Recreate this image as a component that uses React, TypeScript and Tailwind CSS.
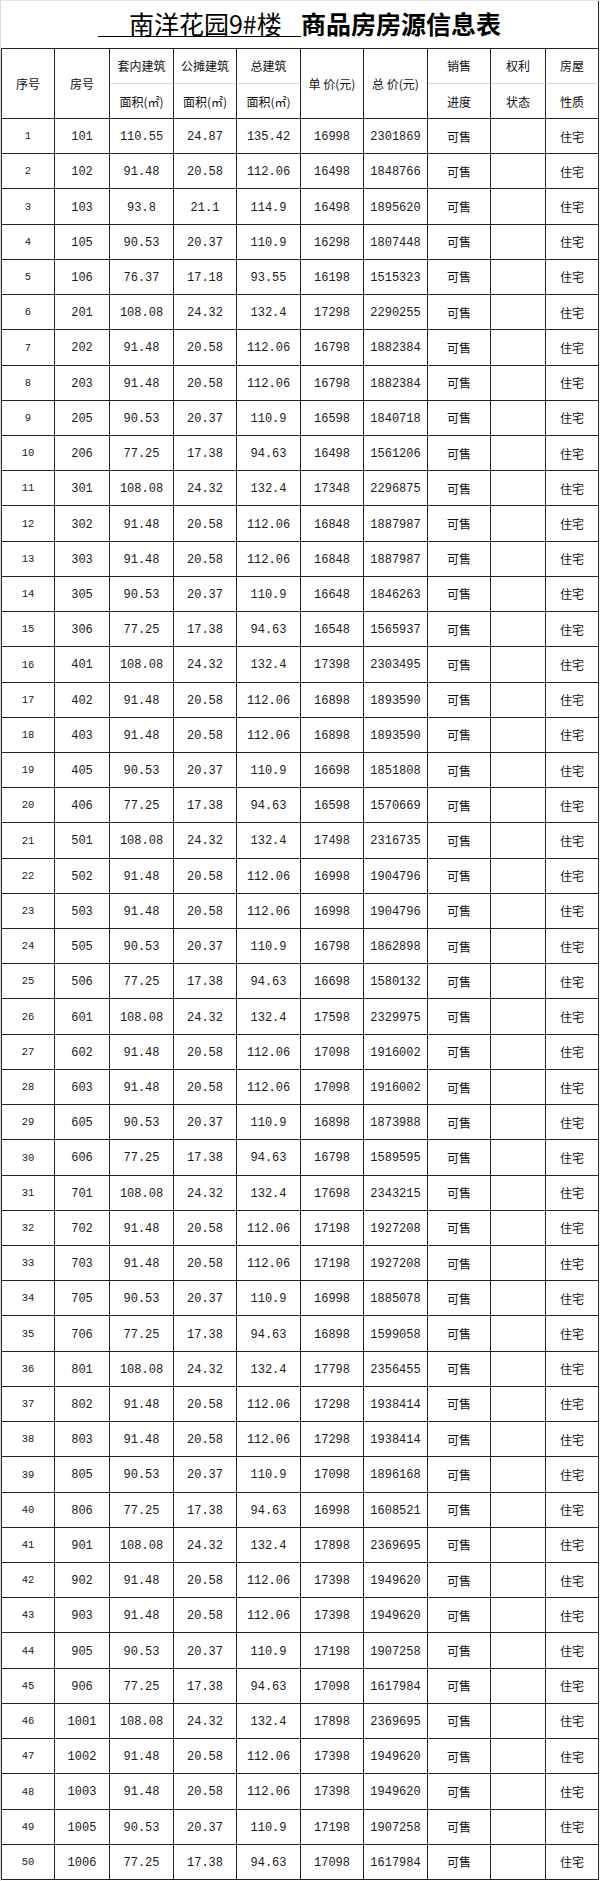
import React from "react";

type Row = [number, string, string, string, string, string, string];

const rows: Row[] = [
  [1, "101", "110.55", "24.87", "135.42", "16998", "2301869"],
  [2, "102", "91.48", "20.58", "112.06", "16498", "1848766"],
  [3, "103", "93.8", "21.1", "114.9", "16498", "1895620"],
  [4, "105", "90.53", "20.37", "110.9", "16298", "1807448"],
  [5, "106", "76.37", "17.18", "93.55", "16198", "1515323"],
  [6, "201", "108.08", "24.32", "132.4", "17298", "2290255"],
  [7, "202", "91.48", "20.58", "112.06", "16798", "1882384"],
  [8, "203", "91.48", "20.58", "112.06", "16798", "1882384"],
  [9, "205", "90.53", "20.37", "110.9", "16598", "1840718"],
  [10, "206", "77.25", "17.38", "94.63", "16498", "1561206"],
  [11, "301", "108.08", "24.32", "132.4", "17348", "2296875"],
  [12, "302", "91.48", "20.58", "112.06", "16848", "1887987"],
  [13, "303", "91.48", "20.58", "112.06", "16848", "1887987"],
  [14, "305", "90.53", "20.37", "110.9", "16648", "1846263"],
  [15, "306", "77.25", "17.38", "94.63", "16548", "1565937"],
  [16, "401", "108.08", "24.32", "132.4", "17398", "2303495"],
  [17, "402", "91.48", "20.58", "112.06", "16898", "1893590"],
  [18, "403", "91.48", "20.58", "112.06", "16898", "1893590"],
  [19, "405", "90.53", "20.37", "110.9", "16698", "1851808"],
  [20, "406", "77.25", "17.38", "94.63", "16598", "1570669"],
  [21, "501", "108.08", "24.32", "132.4", "17498", "2316735"],
  [22, "502", "91.48", "20.58", "112.06", "16998", "1904796"],
  [23, "503", "91.48", "20.58", "112.06", "16998", "1904796"],
  [24, "505", "90.53", "20.37", "110.9", "16798", "1862898"],
  [25, "506", "77.25", "17.38", "94.63", "16698", "1580132"],
  [26, "601", "108.08", "24.32", "132.4", "17598", "2329975"],
  [27, "602", "91.48", "20.58", "112.06", "17098", "1916002"],
  [28, "603", "91.48", "20.58", "112.06", "17098", "1916002"],
  [29, "605", "90.53", "20.37", "110.9", "16898", "1873988"],
  [30, "606", "77.25", "17.38", "94.63", "16798", "1589595"],
  [31, "701", "108.08", "24.32", "132.4", "17698", "2343215"],
  [32, "702", "91.48", "20.58", "112.06", "17198", "1927208"],
  [33, "703", "91.48", "20.58", "112.06", "17198", "1927208"],
  [34, "705", "90.53", "20.37", "110.9", "16998", "1885078"],
  [35, "706", "77.25", "17.38", "94.63", "16898", "1599058"],
  [36, "801", "108.08", "24.32", "132.4", "17798", "2356455"],
  [37, "802", "91.48", "20.58", "112.06", "17298", "1938414"],
  [38, "803", "91.48", "20.58", "112.06", "17298", "1938414"],
  [39, "805", "90.53", "20.37", "110.9", "17098", "1896168"],
  [40, "806", "77.25", "17.38", "94.63", "16998", "1608521"],
  [41, "901", "108.08", "24.32", "132.4", "17898", "2369695"],
  [42, "902", "91.48", "20.58", "112.06", "17398", "1949620"],
  [43, "903", "91.48", "20.58", "112.06", "17398", "1949620"],
  [44, "905", "90.53", "20.37", "110.9", "17198", "1907258"],
  [45, "906", "77.25", "17.38", "94.63", "17098", "1617984"],
  [46, "1001", "108.08", "24.32", "132.4", "17898", "2369695"],
  [47, "1002", "91.48", "20.58", "112.06", "17398", "1949620"],
  [48, "1003", "91.48", "20.58", "112.06", "17398", "1949620"],
  [49, "1005", "90.53", "20.37", "110.9", "17198", "1907258"],
  [50, "1006", "77.25", "17.38", "94.63", "17098", "1617984"],
];

const cell = "flex items-center justify-center border-r border-b border-[#262626]";
const cjk = "font-['Noto_Sans_CJK_SC',sans-serif] text-[12px] text-[#111]";
const mono = "font-['Liberation_Mono',monospace] text-[12px] text-[#1a1a1a]";
const headLight = "flex items-end justify-center pb-[8px] border-r border-b border-r-[#262626] border-b-[#d6d6e8]";
const headLow = "flex items-start justify-center pt-[9px] border-r border-b border-[#262626]";

export default function App() {
  return (
    <div className="w-[600px] h-[1881px] bg-white border-l border-l-[#d3d9e6] border-t border-t-[#e3e7ef]">
      <div className="h-[47px] w-[598px] border-r border-[#262626] flex justify-center items-start pt-[9px] font-['Noto_Sans_CJK_SC',sans-serif] text-[25px] text-black">
        <span className="inline-block w-[203px] h-[27px] leading-[26px] border-b border-black pl-[31px] whitespace-nowrap">
          南洋花园9#楼
        </span>
        <span className="inline-block leading-[26px] font-bold whitespace-nowrap">商品房房源信息表</span>
      </div>
      <div className="grid w-[598px] border-l border-t border-[#262626] grid-cols-[53px_55px_64px_63px_64px_63px_64px_63px_55px_53px] grid-rows-[35px_35px_repeat(50,35.22px)]">
        <div className={`${cell} row-span-2 ${cjk}`}>序号</div>
        <div className={`${cell} row-span-2 ${cjk}`}>房号</div>
        <div className={`${headLight} ${cjk}`}>套内建筑</div>
        <div className={`${headLight} ${cjk}`}>公摊建筑</div>
        <div className={`${headLight} ${cjk}`}>总建筑</div>
        <div className={`${cell} row-span-2 ${cjk} whitespace-pre`}>单 价(元)</div>
        <div className={`${cell} row-span-2 ${cjk} whitespace-pre`}>总 价(元)</div>
        <div className={`${headLight} ${cjk}`}>销售</div>
        <div className={`${headLight} ${cjk}`}>权利</div>
        <div className={`${headLight} ${cjk}`}>房屋</div>
        <div className={`${headLow} ${cjk}`}>面积(㎡)</div>
        <div className={`${headLow} ${cjk}`}>面积(㎡)</div>
        <div className={`${headLow} ${cjk}`}>面积(㎡)</div>
        <div className={`${headLow} ${cjk}`}>进度</div>
        <div className={`${headLow} ${cjk}`}>状态</div>
        <div className={`${headLow} ${cjk}`}>性质</div>
        {rows.map((r) => (
          <React.Fragment key={r[0]}>
            <div className={`${cell} pt-[2px] font-['Liberation_Mono',monospace] text-[10.5px] text-[#1a1a1a]`}>{r[0]}</div>
            <div className={`${cell} pt-[2px] ${mono}`}>{r[1]}</div>
            <div className={`${cell} pt-[2px] ${mono}`}>{r[2]}</div>
            <div className={`${cell} pt-[2px] ${mono}`}>{r[3]}</div>
            <div className={`${cell} pt-[2px] ${mono}`}>{r[4]}</div>
            <div className={`${cell} pt-[2px] ${mono}`}>{r[5]}</div>
            <div className={`${cell} pt-[2px] ${mono}`}>{r[6]}</div>
            <div className={`${cell} pt-[1px] ${cjk}`}>可售</div>
            <div className={cell}></div>
            <div className={`${cell} pt-[1px] ${cjk}`}>住宅</div>
          </React.Fragment>
        ))}
      </div>
    </div>
  );
}
